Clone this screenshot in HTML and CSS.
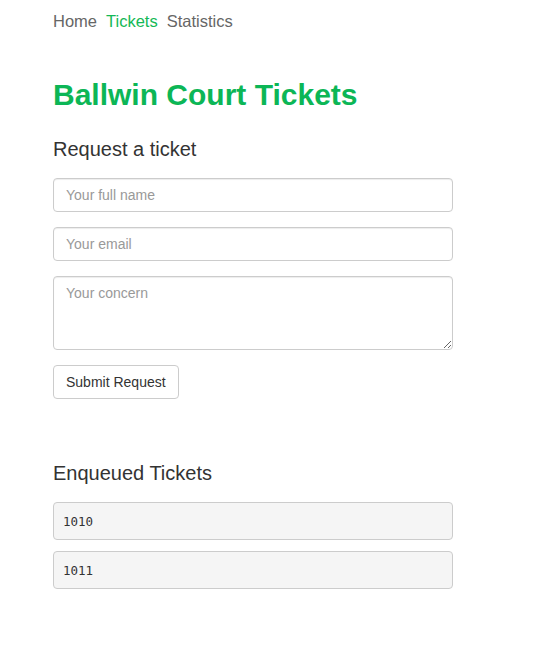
FILE: index.html
```html
<!DOCTYPE html>
<html>
<head>
<meta charset="utf-8">
<link rel="stylesheet" href="styles.css">
</head>
<body>
<div class="page">
  <nav class="nav">
    <a class="nav-link">Home</a>
    <a class="nav-link active">Tickets</a>
    <a class="nav-link">Statistics</a>
  </nav>
  <h1 class="title">Ballwin Court Tickets</h1>
  <h2 class="section">Request a ticket</h2>
  <form class="form">
    <input class="field" type="text" placeholder="Your full name">
    <input class="field" type="text" placeholder="Your email">
    <textarea class="field area" placeholder="Your concern"></textarea>
    <div><button class="btn" type="button">Submit Request</button></div>
  </form>
  <h2 class="section queue-title">Enqueued Tickets</h2>
  <div class="tickets">
    <pre class="ticket">1010</pre>
    <pre class="ticket">1011</pre>
  </div>
</div>
</body>
</html>
```
FILE: styles.css
```css
* { box-sizing: border-box; }
body {
  margin: 0;
  background: #fff;
  font-family: "Liberation Sans", Arial, sans-serif;
  color: #333;
}
.page {
  width: 400px;
  margin-left: 53px;
  padding-top: 11px;
}
.nav {
  display: flex;
  gap: 9px;
  font-size: 16.5px;
  line-height: 20px;
}
.nav-link { color: #666; text-decoration: none; }
.nav-link.active { color: #14b856; }
.title {
  margin: 46px 0 0;
  font-size: 30px;
  line-height: 36px;
  font-weight: bold;
  color: #0cb656;
}
.section {
  margin: 24px 0 0;
  font-size: 20px;
  line-height: 24px;
  font-weight: normal;
  color: #333;
}
.form {
  margin-top: 17px;
  display: flex;
  flex-direction: column;
  gap: 15px;
}
.field {
  display: block;
  width: 400px;
  height: 34px;
  margin: 0;
  padding: 6px 12px;
  font-family: "Liberation Sans", Arial, sans-serif;
  font-size: 14px;
  color: #555;
  border: 1px solid #ccc;
  border-radius: 4px;
  box-shadow: inset 0 1px 1px rgba(0,0,0,0.075);
  background: #fff;
}
.field::placeholder { color: #999; }
.area { height: 74px; padding-top: 8px; resize: vertical; }
.btn {
  height: 34px;
  padding: 6px 12px;
  font-family: "Liberation Sans", Arial, sans-serif;
  font-size: 14px;
  color: #333;
  background: #fff;
  border: 1px solid #ccc;
  border-radius: 4px;
}
.queue-title { margin-top: 62px; }
.tickets {
  margin-top: 17px;
  display: flex;
  flex-direction: column;
  gap: 11px;
}
.ticket {
  margin: 0;
  height: 38px;
  padding: 10px 9px 8px;
  font-family: "DejaVu Sans Mono", "Liberation Mono", monospace;
  font-size: 12.5px;
  line-height: 18px;
  color: #333;
  background: #f5f5f5;
  border: 1px solid #ccc;
  border-radius: 4px;
}
```
